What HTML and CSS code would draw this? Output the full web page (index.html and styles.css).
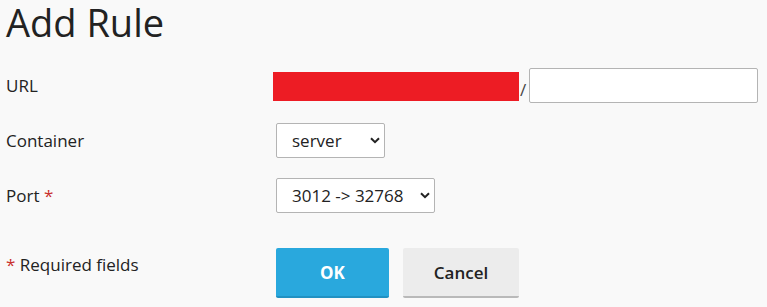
FILE: index.html
```html
<!DOCTYPE html>
<html lang="en">
<head>
  <meta charset="UTF-8" />
  <title>Add Rule</title>
  <link rel="stylesheet" href="styles.css">
</head>
<body>
  <h1 class="title">Add Rule</h1>

  <form class="rule-form">
    <div class="row">
      <label class="label" for="url-path">URL</label>
      <div class="field url-field">
        <span class="host-redacted"></span>
        <span class="slash">/</span>
        <input type="text" id="url-path" class="text-input">
      </div>
    </div>

    <div class="row">
      <label class="label" for="container">Container</label>
      <div class="field">
        <span class="select-wrap">
          <select id="container" class="select select-container">
            <option>server</option>
          </select>
          <svg class="chevron" width="10" height="7" viewBox="0 0 10 7"><path d="M1 1.2 5 5.2 9 1.2" fill="none" stroke="#222" stroke-width="2"/></svg>
        </span>
      </div>
    </div>

    <div class="row">
      <label class="label" for="port">Port <span class="req">*</span></label>
      <div class="field">
        <span class="select-wrap">
          <select id="port" class="select select-port">
            <option>3012 -&gt; 32768</option>
          </select>
          <svg class="chevron" width="10" height="7" viewBox="0 0 10 7"><path d="M1 1.2 5 5.2 9 1.2" fill="none" stroke="#222" stroke-width="2"/></svg>
        </span>
      </div>
    </div>

    <div class="row actions-row">
      <div class="label required-note"><span class="req">*</span> Required fields</div>
      <div class="actions">
        <button type="button" class="btn btn-ok">OK</button>
        <button type="button" class="btn btn-cancel">Cancel</button>
      </div>
    </div>
  </form>
</body>
</html>
```

FILE: styles.css
```css
body {
  font-family: "Open Sans", Arial, sans-serif;
  font-size: 17px;
  color: #222;
  background: #f9f9f9;
  margin: 0;
  padding: 0 6px;
}
.title {
  font-size: 38px;
  font-weight: 400;
  line-height: 44px;
  margin: 0 0 24px 0;
}
.rule-form {
  display: flex;
  flex-direction: column;
  gap: 20px;
}
.row {
  display: grid;
  grid-template-columns: 270px 1fr;
  align-items: center;
  min-height: 35px;
}
.label {
  line-height: 23px;
}
.req {
  color: #c9302c;
}
.field {
  display: flex;
  align-items: center;
}
.url-field {
  align-items: stretch;
}
.host-redacted {
  display: block;
  width: 246px;
  height: 29px;
  margin: 4px 1px 1px -3px;
  background: #ed1c24;
}
.slash {
  align-self: center;
  width: 9px;
  color: #444;
  line-height: 23px;
  padding-top: 8px;
}
.text-input {
  box-sizing: border-box;
  width: 229px;
  height: 35px;
  border: 1px solid #b4b4b4;
  border-radius: 2px;
  background: #fff;
  font: inherit;
  padding: 0 6px;
}
.select-wrap {
  position: relative;
  display: inline-block;
}
.select {
  -webkit-appearance: none;
  appearance: none;
  box-sizing: border-box;
  height: 35px;
  border: 1px solid #b4b4b4;
  border-radius: 2px;
  background: #fff;
  font: inherit;
  color: #222;
  padding: 0 0 0 15px;
}
.select-container {
  width: 109px;
}
.select-port {
  width: 159px;
}
.chevron {
  position: absolute;
  right: 5px;
  top: 14px;
  pointer-events: none;
}
.actions-row {
  align-items: start;
  margin-top: 15px;
}
.required-note {
  padding-top: 5px;
}
.actions {
  display: flex;
  gap: 14px;
}
.btn {
  font-family: inherit;
  font-size: 17px;
  height: 50px;
  border: none;
  border-radius: 2px;
  cursor: pointer;
}
.btn-ok {
  width: 113px;
  background: #29a8dd;
  border-bottom: 2px solid #2191c2;
  color: #fff;
  font-weight: 700;
}
.btn-cancel {
  width: 116px;
  background: #ececec;
  border-bottom: 2px solid #b9b9b9;
  color: #222;
  font-weight: 600;
}
```
